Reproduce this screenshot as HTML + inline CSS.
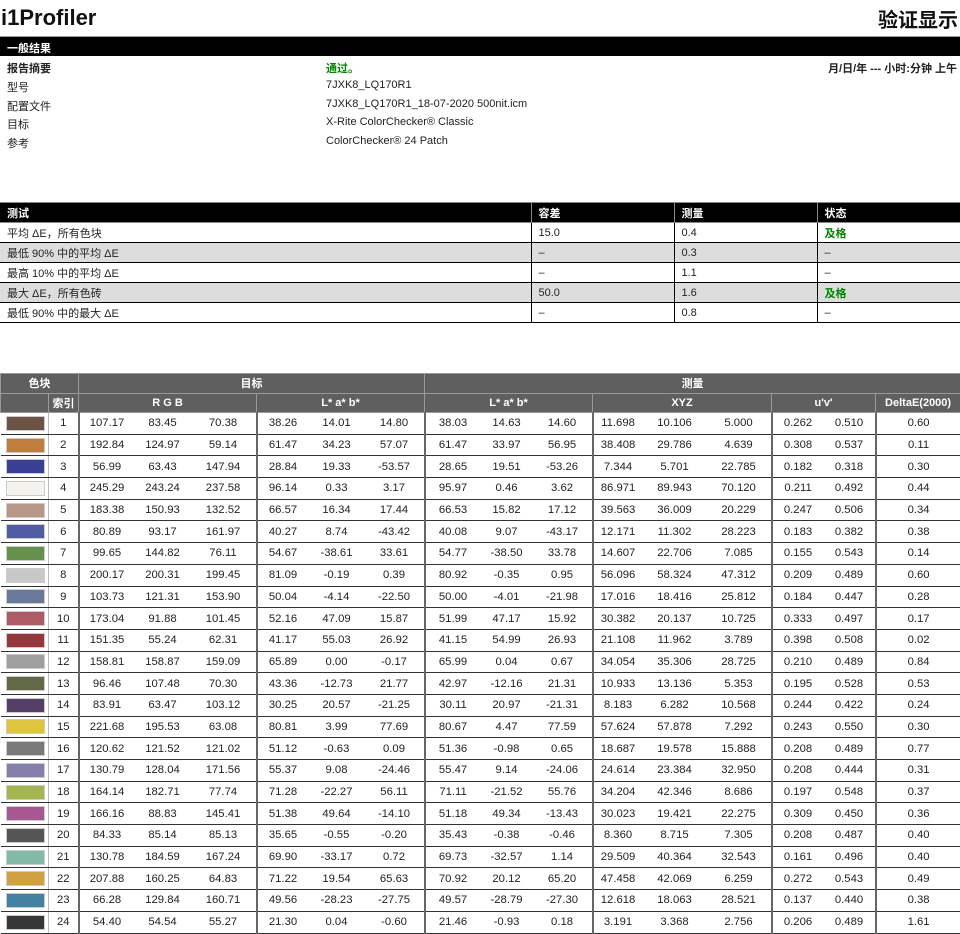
<!DOCTYPE html>
<html><head><meta charset="utf-8"><style>
*{margin:0;padding:0;box-sizing:border-box}
body{width:960px;height:933px;overflow:hidden;background:#fff;font-family:"Liberation Sans","Noto Sans CJK SC",sans-serif;font-size:11px;color:#222;position:relative}
.abs{position:absolute}
h1{position:absolute;left:1px;top:5px;font-size:22px;font-weight:bold;color:#111}
h2{position:absolute;right:2px;top:4px;font-size:20px;font-weight:bold;color:#111}
.bar{position:absolute;left:0;top:36px;width:960px;height:20px;background:#000;border-top:1px solid #999;color:#fff;font-weight:bold;padding:3px 0 0 7px}
.l{position:absolute;left:7px}.v{position:absolute;left:326px}
table{border-collapse:collapse;table-layout:fixed;position:absolute;left:0;width:960px}
#t1{top:202px}
#t1 td{height:20px;border:1px solid #000;padding:0 0 0 7px;border-left:none}
#t1 td+td{border-left:1px solid #000}
#t1 tr.h td{background:#000;color:#fff;font-weight:bold;border-color:#888}
#t1 tr.g td{background:#ddd}
.ok{color:#080;font-weight:bold}
#t2{top:373px}
#t2 th{background:#5f5f5f;color:#fff;font-weight:bold;height:19.5px;border:1px solid #999;font-size:11px}
#t2 td{height:21.7px;text-align:center;border-bottom:1px solid #333;white-space:nowrap;font-size:11.3px}
#t2 td:nth-child(2){border-left:1px solid #bbb}
#t2 td:nth-child(3),#t2 td:nth-child(6),#t2 td:nth-child(9),#t2 td:nth-child(12),#t2 td:nth-child(15),#t2 td:nth-child(17){border-left:2px solid #666}
.s{padding:0 4px}.s div{width:39px;height:15px;margin:0 auto 0 1px;border:1px solid #ccc}
</style></head><body>
<h1>i1Profiler</h1><h2>验证显示</h2>
<div class="bar">一般结果</div>
<div class="abs" style="top:60px;left:7px;font-weight:bold">报告摘要</div><div class="abs ok" style="top:60px;left:326px">通过。</div><div class="abs" style="top:60px;right:3px;font-weight:bold">月/日/年 --- 小时:分钟 上午</div>
<div class="l" style="top:79px">型号</div><div class="v" style="top:79px">7JXK8_LQ170R1</div>
<div class="l" style="top:98px">配置文件</div><div class="v" style="top:98px">7JXK8_LQ170R1_18-07-2020 500nit.icm</div>
<div class="l" style="top:116px">目标</div><div class="v" style="top:116px">X-Rite ColorChecker® Classic</div>
<div class="l" style="top:135px">参考</div><div class="v" style="top:135px">ColorChecker® 24 Patch</div>
<table id="t1"><colgroup><col style="width:531px"><col style="width:143px"><col style="width:143px"><col style="width:143px"></colgroup>
<tr class="h"><td>测试</td><td>容差</td><td>测量</td><td>状态</td></tr>
<tr><td>平均 ΔE，所有色块</td><td>15.0</td><td>0.4</td><td class="ok">及格</td></tr>
<tr class="g"><td>最低 90% 中的平均 ΔE</td><td>–</td><td>0.3</td><td>–</td></tr>
<tr><td>最高 10% 中的平均 ΔE</td><td>–</td><td>1.1</td><td>–</td></tr>
<tr class="g"><td>最大 ΔE，所有色砖</td><td>50.0</td><td>1.6</td><td class="ok">及格</td></tr>
<tr><td>最低 90% 中的最大 ΔE</td><td>–</td><td>0.8</td><td>–</td></tr>
</table>
<table id="t2"><colgroup><col style="width:48px"><col style="width:30px"><col style="width:56px"><col style="width:56px"><col style="width:66px"><col style="width:52px"><col style="width:56px"><col style="width:60px"><col style="width:56px"><col style="width:52px"><col style="width:60px"><col style="width:50px"><col style="width:64px"><col style="width:65px"><col style="width:52px"><col style="width:52px"><col style="width:85px"></colgroup>
<tr><th colspan="2">色块</th><th colspan="6">目标</th><th colspan="9">测量</th></tr>
<tr><th></th><th>索引</th><th colspan="3">R G B</th><th colspan="3">L* a* b*</th><th colspan="3">L* a* b*</th><th colspan="3">XYZ</th><th colspan="2">u'v'</th><th>DeltaE(2000)</th></tr>
<tr><td class="s"><div style="background:rgb(107,83,70)"></div></td><td>1</td><td>107.17</td><td>83.45</td><td>70.38</td><td>38.26</td><td>14.01</td><td>14.80</td><td>38.03</td><td>14.63</td><td>14.60</td><td>11.698</td><td>10.106</td><td>5.000</td><td>0.262</td><td>0.510</td><td>0.60</td></tr>
<tr><td class="s"><div style="background:rgb(193,125,59)"></div></td><td>2</td><td>192.84</td><td>124.97</td><td>59.14</td><td>61.47</td><td>34.23</td><td>57.07</td><td>61.47</td><td>33.97</td><td>56.95</td><td>38.408</td><td>29.786</td><td>4.639</td><td>0.308</td><td>0.537</td><td>0.11</td></tr>
<tr><td class="s"><div style="background:rgb(57,63,148)"></div></td><td>3</td><td>56.99</td><td>63.43</td><td>147.94</td><td>28.84</td><td>19.33</td><td>-53.57</td><td>28.65</td><td>19.51</td><td>-53.26</td><td>7.344</td><td>5.701</td><td>22.785</td><td>0.182</td><td>0.318</td><td>0.30</td></tr>
<tr><td class="s"><div style="background:rgb(245,243,238)"></div></td><td>4</td><td>245.29</td><td>243.24</td><td>237.58</td><td>96.14</td><td>0.33</td><td>3.17</td><td>95.97</td><td>0.46</td><td>3.62</td><td>86.971</td><td>89.943</td><td>70.120</td><td>0.211</td><td>0.492</td><td>0.44</td></tr>
<tr><td class="s"><div style="background:rgb(183,151,133)"></div></td><td>5</td><td>183.38</td><td>150.93</td><td>132.52</td><td>66.57</td><td>16.34</td><td>17.44</td><td>66.53</td><td>15.82</td><td>17.12</td><td>39.563</td><td>36.009</td><td>20.229</td><td>0.247</td><td>0.506</td><td>0.34</td></tr>
<tr><td class="s"><div style="background:rgb(81,93,162)"></div></td><td>6</td><td>80.89</td><td>93.17</td><td>161.97</td><td>40.27</td><td>8.74</td><td>-43.42</td><td>40.08</td><td>9.07</td><td>-43.17</td><td>12.171</td><td>11.302</td><td>28.223</td><td>0.183</td><td>0.382</td><td>0.38</td></tr>
<tr><td class="s"><div style="background:rgb(100,145,76)"></div></td><td>7</td><td>99.65</td><td>144.82</td><td>76.11</td><td>54.67</td><td>-38.61</td><td>33.61</td><td>54.77</td><td>-38.50</td><td>33.78</td><td>14.607</td><td>22.706</td><td>7.085</td><td>0.155</td><td>0.543</td><td>0.14</td></tr>
<tr><td class="s"><div style="background:rgb(200,200,199)"></div></td><td>8</td><td>200.17</td><td>200.31</td><td>199.45</td><td>81.09</td><td>-0.19</td><td>0.39</td><td>80.92</td><td>-0.35</td><td>0.95</td><td>56.096</td><td>58.324</td><td>47.312</td><td>0.209</td><td>0.489</td><td>0.60</td></tr>
<tr><td class="s"><div style="background:rgb(104,121,154)"></div></td><td>9</td><td>103.73</td><td>121.31</td><td>153.90</td><td>50.04</td><td>-4.14</td><td>-22.50</td><td>50.00</td><td>-4.01</td><td>-21.98</td><td>17.016</td><td>18.416</td><td>25.812</td><td>0.184</td><td>0.447</td><td>0.28</td></tr>
<tr><td class="s"><div style="background:rgb(173,92,101)"></div></td><td>10</td><td>173.04</td><td>91.88</td><td>101.45</td><td>52.16</td><td>47.09</td><td>15.87</td><td>51.99</td><td>47.17</td><td>15.92</td><td>30.382</td><td>20.137</td><td>10.725</td><td>0.333</td><td>0.497</td><td>0.17</td></tr>
<tr><td class="s"><div style="background:rgb(151,55,62)"></div></td><td>11</td><td>151.35</td><td>55.24</td><td>62.31</td><td>41.17</td><td>55.03</td><td>26.92</td><td>41.15</td><td>54.99</td><td>26.93</td><td>21.108</td><td>11.962</td><td>3.789</td><td>0.398</td><td>0.508</td><td>0.02</td></tr>
<tr><td class="s"><div style="background:rgb(159,159,159)"></div></td><td>12</td><td>158.81</td><td>158.87</td><td>159.09</td><td>65.89</td><td>0.00</td><td>-0.17</td><td>65.99</td><td>0.04</td><td>0.67</td><td>34.054</td><td>35.306</td><td>28.725</td><td>0.210</td><td>0.489</td><td>0.84</td></tr>
<tr><td class="s"><div style="background:rgb(96,107,70)"></div></td><td>13</td><td>96.46</td><td>107.48</td><td>70.30</td><td>43.36</td><td>-12.73</td><td>21.77</td><td>42.97</td><td>-12.16</td><td>21.31</td><td>10.933</td><td>13.136</td><td>5.353</td><td>0.195</td><td>0.528</td><td>0.53</td></tr>
<tr><td class="s"><div style="background:rgb(84,63,103)"></div></td><td>14</td><td>83.91</td><td>63.47</td><td>103.12</td><td>30.25</td><td>20.57</td><td>-21.25</td><td>30.11</td><td>20.97</td><td>-21.31</td><td>8.183</td><td>6.282</td><td>10.568</td><td>0.244</td><td>0.422</td><td>0.24</td></tr>
<tr><td class="s"><div style="background:rgb(222,196,63)"></div></td><td>15</td><td>221.68</td><td>195.53</td><td>63.08</td><td>80.81</td><td>3.99</td><td>77.69</td><td>80.67</td><td>4.47</td><td>77.59</td><td>57.624</td><td>57.878</td><td>7.292</td><td>0.243</td><td>0.550</td><td>0.30</td></tr>
<tr><td class="s"><div style="background:rgb(121,122,121)"></div></td><td>16</td><td>120.62</td><td>121.52</td><td>121.02</td><td>51.12</td><td>-0.63</td><td>0.09</td><td>51.36</td><td>-0.98</td><td>0.65</td><td>18.687</td><td>19.578</td><td>15.888</td><td>0.208</td><td>0.489</td><td>0.77</td></tr>
<tr><td class="s"><div style="background:rgb(131,128,172)"></div></td><td>17</td><td>130.79</td><td>128.04</td><td>171.56</td><td>55.37</td><td>9.08</td><td>-24.46</td><td>55.47</td><td>9.14</td><td>-24.06</td><td>24.614</td><td>23.384</td><td>32.950</td><td>0.208</td><td>0.444</td><td>0.31</td></tr>
<tr><td class="s"><div style="background:rgb(164,183,78)"></div></td><td>18</td><td>164.14</td><td>182.71</td><td>77.74</td><td>71.28</td><td>-22.27</td><td>56.11</td><td>71.11</td><td>-21.52</td><td>55.76</td><td>34.204</td><td>42.346</td><td>8.686</td><td>0.197</td><td>0.548</td><td>0.37</td></tr>
<tr><td class="s"><div style="background:rgb(166,89,145)"></div></td><td>19</td><td>166.16</td><td>88.83</td><td>145.41</td><td>51.38</td><td>49.64</td><td>-14.10</td><td>51.18</td><td>49.34</td><td>-13.43</td><td>30.023</td><td>19.421</td><td>22.275</td><td>0.309</td><td>0.450</td><td>0.36</td></tr>
<tr><td class="s"><div style="background:rgb(84,85,85)"></div></td><td>20</td><td>84.33</td><td>85.14</td><td>85.13</td><td>35.65</td><td>-0.55</td><td>-0.20</td><td>35.43</td><td>-0.38</td><td>-0.46</td><td>8.360</td><td>8.715</td><td>7.305</td><td>0.208</td><td>0.487</td><td>0.40</td></tr>
<tr><td class="s"><div style="background:rgb(131,185,167)"></div></td><td>21</td><td>130.78</td><td>184.59</td><td>167.24</td><td>69.90</td><td>-33.17</td><td>0.72</td><td>69.73</td><td>-32.57</td><td>1.14</td><td>29.509</td><td>40.364</td><td>32.543</td><td>0.161</td><td>0.496</td><td>0.40</td></tr>
<tr><td class="s"><div style="background:rgb(208,160,65)"></div></td><td>22</td><td>207.88</td><td>160.25</td><td>64.83</td><td>71.22</td><td>19.54</td><td>65.63</td><td>70.92</td><td>20.12</td><td>65.20</td><td>47.458</td><td>42.069</td><td>6.259</td><td>0.272</td><td>0.543</td><td>0.49</td></tr>
<tr><td class="s"><div style="background:rgb(66,130,161)"></div></td><td>23</td><td>66.28</td><td>129.84</td><td>160.71</td><td>49.56</td><td>-28.23</td><td>-27.75</td><td>49.57</td><td>-28.79</td><td>-27.30</td><td>12.618</td><td>18.063</td><td>28.521</td><td>0.137</td><td>0.440</td><td>0.38</td></tr>
<tr><td class="s"><div style="background:rgb(54,55,55)"></div></td><td>24</td><td>54.40</td><td>54.54</td><td>55.27</td><td>21.30</td><td>0.04</td><td>-0.60</td><td>21.46</td><td>-0.93</td><td>0.18</td><td>3.191</td><td>3.368</td><td>2.756</td><td>0.206</td><td>0.489</td><td>1.61</td></tr>
</table>
</body></html>
